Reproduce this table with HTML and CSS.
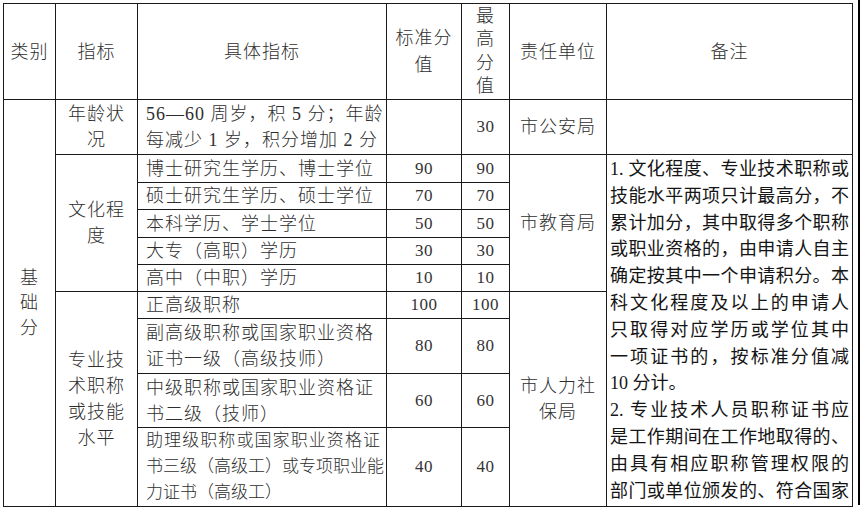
FILE: index.html
```html
<!DOCTYPE html>
<html lang="zh-CN">
<head>
<meta charset="utf-8">
<title>积分指标</title>
<link rel="stylesheet" href="styles.css">
</head>
<body>
<table class="score">
  <colgroup>
    <col class="c1"><col class="c2"><col class="c3"><col class="c4"><col class="c5"><col class="c6"><col class="c7">
  </colgroup>
  <tr class="r-head">
    <td>类别</td>
    <td>指标</td>
    <td>具体指标</td>
    <td class="two">标准分<br>值</td>
    <td class="four">最<br>高<br>分<br>值</td>
    <td>责任单位</td>
    <td>备注</td>
  </tr>
  <tr class="r-age">
    <td rowspan="10" class="cat">基<br>础<br>分</td>
    <td>年龄状<br>况</td>
    <td class="desc">56—60 周岁，积 5 分；年龄<br>每减少 1 岁，积分增加 2 分</td>
    <td class="num"></td>
    <td class="num">30</td>
    <td>市公安局</td>
    <td></td>
  </tr>
  <tr class="r-a">
    <td rowspan="5">文化程<br>度</td>
    <td class="desc">博士研究生学历、博士学位</td>
    <td class="num">90</td>
    <td class="num">90</td>
    <td rowspan="5">市教育局</td>
    <td rowspan="9" class="notes">
      <div class="j">1. 文化程度、专业技术职称或</div>
      <div class="j">技能水平两项只计最高分，不</div>
      <div class="j">累计加分，其中取得多个职称</div>
      <div class="j">或职业资格的，由申请人自主</div>
      <div class="j">确定按其中一个申请积分。本</div>
      <div class="j">科文化程度及以上的申请人</div>
      <div class="j">只取得对应学历或学位其中</div>
      <div class="j">一项证书的，按标准分值减</div>
      <div>10 分计。</div>
      <div class="j">2. 专业技术人员职称证书应</div>
      <div class="j">是工作期间在工作地取得的、</div>
      <div class="j">由具有相应职称管理权限的</div>
      <div class="j">部门或单位颁发的、符合国家</div>
    </td>
  </tr>
  <tr class="r-b">
    <td class="desc">硕士研究生学历、硕士学位</td>
    <td class="num">70</td>
    <td class="num">70</td>
  </tr>
  <tr class="r-c">
    <td class="desc">本科学历、学士学位</td>
    <td class="num">50</td>
    <td class="num">50</td>
  </tr>
  <tr class="r-d">
    <td class="desc">大专（高职）学历</td>
    <td class="num">30</td>
    <td class="num">30</td>
  </tr>
  <tr class="r-e">
    <td class="desc">高中（中职）学历</td>
    <td class="num">10</td>
    <td class="num">10</td>
  </tr>
  <tr class="r-f">
    <td rowspan="4">专业技<br>术职称<br>或技能<br>水平</td>
    <td class="desc">正高级职称</td>
    <td class="num">100</td>
    <td class="num">100</td>
    <td rowspan="4">市人力社<br>保局</td>
  </tr>
  <tr class="r-g">
    <td class="desc">副高级职称或国家职业资格<br>证书一级（高级技师）</td>
    <td class="num">80</td>
    <td class="num">80</td>
  </tr>
  <tr class="r-h">
    <td class="desc">中级职称或国家职业资格证<br>书二级（技师）</td>
    <td class="num">60</td>
    <td class="num">60</td>
  </tr>
  <tr class="r-i">
    <td class="desc tight"><div class="j">助理级职称或国家职业资格证</div><div class="j">书三级（高级工）或专项职业能</div><div>力证书（高级工）</div></td>
    <td class="num">40</td>
    <td class="num">40</td>
  </tr>
</table>
<div class="edge"></div>
</body>
</html>
```

FILE: styles.css
```css
html, body {
  margin: 0;
  background: #ffffff;
}
body {
  padding: 3px 0 0 3px;
  display: flex;
  align-items: flex-start;
  font-family: "Liberation Serif", "Noto Sans CJK SC", serif;
}
.score {
  border-collapse: collapse;
  table-layout: fixed;
  width: 849px;
}
.c1 { width: 52px; }
.c2 { width: 82px; }
.c3 { width: 249px; }
.c4 { width: 75px; }
.c5 { width: 48px; }
.c6 { width: 97px; }
.c7 { width: 246px; }

.score td {
  border: 1px solid #1a1a1a;
  padding: 0;
  text-align: center;
  vertical-align: middle;
  font-size: 18px;
  font-weight: 300;
  line-height: 26px;
  letter-spacing: 1px;
  color: #2e2e2e;
  white-space: nowrap;
  overflow: hidden;
}
.r-head { height: 96px; }
.r-age { height: 55px; }
.r-a { height: 28px; }
.r-b { height: 26px; }
.r-c { height: 28px; }
.r-d { height: 27px; }
.r-e { height: 27px; }
.r-f { height: 27px; }
.r-g { height: 55px; }
.r-h { height: 54px; }
.r-i { height: 79px; }

.score td.two { line-height: 27px; }
.score td.four { line-height: 23.5px; }
.score td.cat { line-height: 25px; }

.score td.desc {
  text-align: left;
  padding-left: 8px;
}
.score td.tight {
  font-size: 17px;
  letter-spacing: 0;
  padding-right: 6px;
}
.score td.num {
  font-size: 17px;
  letter-spacing: 0.5px;
  color: #333333;
}
.score td.notes {
  vertical-align: top;
  text-align: left;
  padding: 1px 3px 0 3px;
  font-size: 18px;
  font-weight: 400;
  line-height: 26.8px;
  letter-spacing: 0;
  color: #151515;
}
.j {
  text-align: justify;
  text-align-last: justify;
}
.edge {
  width: 4px;
  height: 505px;
  margin-top: -3px;
  margin-left: 5px;
  background: #000000;
}
```
